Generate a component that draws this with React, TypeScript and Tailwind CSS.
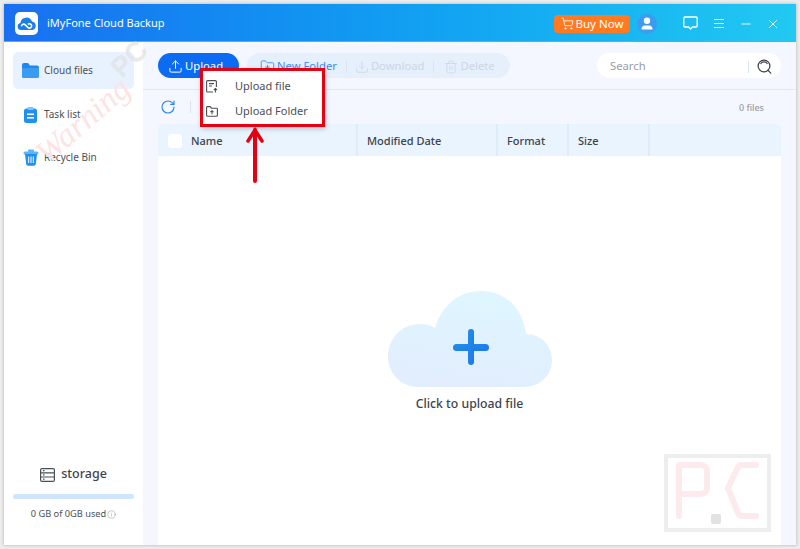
import React from "react";
import { Upload, FolderPlus, Download, Trash2, RotateCw, ShoppingCart, Minus, X, Info } from "lucide-react";

function Logo() {
  return (
    <div className="w-[23px] h-[23px] bg-white rounded-[5px] flex items-center justify-center">
      <svg width="20" height="16" viewBox="0 0 20 16">
        <path d="M4 14a3.6 3.6 0 0 1-.6-7.1A6 6 0 0 1 15 5.6a4.3 4.3 0 0 1 .6 8.4z" fill="#1a7fe8" />
        <path d="M4.5 10.2a2.2 2.2 0 0 1 3.8-1.3l2.4 2.4a2.2 2.2 0 1 0 .2-3" fill="none" stroke="#fff" strokeWidth="1.6" />
      </svg>
    </div>
  );
}

function FolderIcon() {
  return (
    <svg width="17" height="15" viewBox="0 0 17 15">
      <path d="M0 2a2 2 0 0 1 2-2h4l2 2.5h7a2 2 0 0 1 2 2V13a2 2 0 0 1-2 2H2a2 2 0 0 1-2-2z" fill="#1e88ec" />
      <path d="M0 5h17v8a2 2 0 0 1-2 2H2a2 2 0 0 1-2-2z" fill="#3a9bf2" />
    </svg>
  );
}

function TaskIcon() {
  return (
    <svg width="14" height="16" viewBox="0 0 14 16">
      <rect x="0" y="1.5" width="13" height="14.5" rx="2.5" fill="#1e90f0" />
      <rect x="3.5" y="0" width="6" height="3" rx="1" fill="#7cc4fa" />
      <rect x="3" y="6.5" width="7" height="1.6" fill="#fff" />
      <rect x="3" y="10" width="7" height="1.6" fill="#fff" />
    </svg>
  );
}

function BinIcon() {
  return (
    <svg width="16" height="17" viewBox="0 0 16 17">
      <rect x="0.5" y="2.5" width="15" height="3" rx="1.5" fill="#5cb5f7" />
      <rect x="5" y="0.5" width="6" height="2.5" rx="1" fill="#5cb5f7" />
      <path d="M2 5h12l-1.2 10a2 2 0 0 1-2 1.8H5.2a2 2 0 0 1-2-1.8z" fill="#1e90f0" />
      <path d="M5.7 7.5v6.5M8 7.5v6.5M10.3 7.5v6.5" stroke="#fff" strokeWidth="1" />
    </svg>
  );
}

function StorageIcon() {
  return (
    <svg width="15" height="14" viewBox="0 0 15 14" fill="none" stroke="#4a4f57" strokeWidth="1.2">
      <rect x="0.6" y="0.6" width="13.8" height="12.8" rx="1.5" />
      <path d="M0.6 4.8h13.8M0.6 9h13.8M3 2.7h1.5M3 6.9h1.5M3 11.2h1.5" />
    </svg>
  );
}

function FileUpIcon() {
  return (
    <svg width="12" height="13" viewBox="0 0 12 13" fill="none" stroke="#4a4f57" strokeWidth="1.1">
      <path d="M7 12H1.6a1 1 0 0 1-1-1V1.6a1 1 0 0 1 1-1h7.8a1 1 0 0 1 1 1V7" />
      <path d="M3 3.6h5M3 6h3M9.4 12.6V8.6M7.8 10l1.6-1.5L11 10" />
    </svg>
  );
}

function FolderUpIcon() {
  return (
    <svg width="12" height="11" viewBox="0 0 12 11" fill="none" stroke="#4a4f57" strokeWidth="1.1">
      <path d="M0.6 1.2a.6.6 0 0 1 .6-.6h3l1.2 1.6h5.2a.8.8 0 0 1 .8.8v6.2a1 1 0 0 1-1 1H1.6a1 1 0 0 1-1-1z" />
      <path d="M6 8.2V4.8M4.5 6.2L6 4.7l1.5 1.5" />
    </svg>
  );
}

function ChatIcon() {
  return (
    <svg width="15" height="15" viewBox="0 0 15 15" fill="none" stroke="#fff" strokeWidth="1.3">
      <path d="M2 1h11a1.2 1.2 0 0 1 1.2 1.2v7.6A1.2 1.2 0 0 1 13 11H9.4L7.5 13 5.6 11H2A1.2 1.2 0 0 1 .8 9.8V2.2A1.2 1.2 0 0 1 2 1z" strokeLinejoin="round" />
    </svg>
  );
}

function SearchGlass() {
  return (
    <svg width="15" height="15" viewBox="0 0 15 15" fill="none" stroke="#3a3f47" strokeWidth="1.2">
      <circle cx="7" cy="7" r="5.9" />
      <path d="M3.8 4.5a4 4 0 0 1 6.4 0M10.8 11.2l3 3" strokeLinecap="round" />
    </svg>
  );
}

function Avatar() {
  return (
    <div className="w-[20px] h-[20px] rounded-full bg-[#3b9bf0] flex items-center justify-center">
      <svg width="12" height="13" viewBox="0 0 12 13" fill="#fff">
        <circle cx="6" cy="3.7" r="3.2" />
        <path d="M0.5 12.5a3.5 3.5 0 0 1 3.5-4h4a3.5 3.5 0 0 1 3.5 4z" />
      </svg>
    </div>
  );
}

function Cloud() {
  return (
    <svg width="164" height="96" viewBox="0 0 164 96">
      <defs>
        <linearGradient id="cloudFill" x1="0.65" y1="0" x2="0.35" y2="1">
          <stop offset="0" stopColor="#def6ff" />
          <stop offset="1" stopColor="#e2edfd" />
        </linearGradient>
        <linearGradient id="plusFill" x1="0" y1="0" x2="1" y2="1">
          <stop offset="0" stopColor="#1f8fe8" />
          <stop offset="1" stopColor="#1f76ee" />
        </linearGradient>
      </defs>
      <path
        d="M30 96C13 96 0 82 0 66C0 47 14 33 32 33C37 33 43 34 47 37C54 14 71 0 93 0C117 0 135 17 138 43C153 43 164 55 164 69C164 84 152 96 136 96Z"
        fill="url(#cloudFill)"
      />
      <rect x="65" y="53" width="36" height="7" rx="3.5" fill="url(#plusFill)" />
      <rect x="80" y="38" width="6" height="36" rx="3" fill="url(#plusFill)" />
    </svg>
  );
}

function SideItem({ icon, label, active }: { icon: React.ReactNode; label: string; active?: boolean }) {
  return (
    <div className={`flex items-center h-[37px] rounded-[5px] ${active ? "bg-[#e8f2fe]" : ""}`}>
      <div className="w-[31px] flex justify-center pl-[4px]">{icon}</div>
      <span className="text-[10px] text-[#4b5058]">{label}</span>
    </div>
  );
}

function HeadCell({ width, children }: { width: string; children?: React.ReactNode }) {
  return (
    <div className={`${width} h-full flex items-center pl-[9px] pt-[2px] border-r-2 border-[#dfebfa] text-[#3e434b] text-[11px] font-medium`}>
      {children}
    </div>
  );
}

export default function App() {
  return (
    <div className="w-[800px] h-[549px] bg-[#ececec] p-[4px] overflow-hidden relative font-['Noto_Sans',sans-serif]">
      <div className="w-full h-full flex flex-col bg-white shadow-[0_0_3px_rgba(0,0,0,0.25)]">
        {/* title bar */}
        <div className="h-[38px] shrink-0 flex items-center pl-[11px] pr-[16px] pt-[2px] bg-gradient-to-r from-[#1a6ff0] to-[#22c9f1] border-b border-[#5aa8f5]">
          <Logo />
          <span className="ml-[9px] text-[11px] text-white">iMyFone Cloud Backup</span>
          <div className="ml-auto flex items-center">
            <div className="w-[76px] h-[18px] bg-[#ff7a20] rounded-[4px] flex items-center justify-center gap-[2px] text-white text-[11.5px]">
              <ShoppingCart size={13} strokeWidth={1.5} />
              Buy Now
            </div>
            <div className="ml-[7px]">
              <Avatar />
            </div>
            <div className="ml-[26px]">
              <ChatIcon />
            </div>
            <div className="ml-[16px] w-[10px] flex flex-col gap-[2.5px]">
              <div className="h-[1.5px] bg-white" />
              <div className="h-[1.5px] bg-white" />
              <div className="h-[1.5px] bg-white" />
            </div>
            <div className="ml-[15px]">
              <Minus size={14} color="#fff" strokeWidth={1.6} />
            </div>
            <div className="ml-[13px]">
              <X size={14} color="#fff" strokeWidth={1.6} />
            </div>
          </div>
        </div>

        <div className="flex flex-1 min-h-0">
          {/* sidebar */}
          <div className="w-[139px] shrink-0 bg-white pt-[10px] px-[9px] pb-[24px] flex flex-col">
            <SideItem active icon={<FolderIcon />} label="Cloud files" />
            <div className="mt-[7px]">
              <SideItem icon={<TaskIcon />} label="Task list" />
            </div>
            <div className="mt-[6px]">
              <SideItem icon={<BinIcon />} label="Recycle Bin" />
            </div>
            <div className="mt-auto flex items-center justify-center gap-[6px] text-[#3e434b] text-[12.5px] font-medium">
              <StorageIcon />
              storage
            </div>
            <div className="mt-[10px] h-[5px] rounded-full bg-[#cfe5fc]" />
            <div className="mt-[8px] flex items-center justify-center gap-[1px] text-[9.25px] text-[#4b5058]">
              0 GB of 0GB used
              <Info size={9} strokeWidth={1} color="#777" />
            </div>
          </div>

          {/* main */}
          <div className="flex-1 min-w-0 bg-[#f4f7ff] flex flex-col">
            <div className="h-[48px] shrink-0 flex items-center px-[15px] border-b border-[#dde8f6]">
              <div className="w-[81px] h-[25px] rounded-full bg-[#0b6bf3] flex items-center pl-[10px] pt-[2px] gap-[2px] text-white text-[11.25px]">
                <Upload size={15} strokeWidth={1.6} />
                Upload
              </div>
              <div className="ml-[8px] w-[263px] h-[25px] rounded-full bg-[#e6effc] flex items-center pl-[13px] pt-[2px] text-[11.25px]">
                <div className="flex items-center gap-[2px] text-[#3d8bf2]">
                  <FolderPlus size={15} strokeWidth={1.4} />
                  New Folder
                </div>
                <div className="w-px h-[12px] bg-[#d8e3f3] ml-[9px]" />
                <div className="ml-[8px] flex items-center gap-[2px] text-[#cdd6e3]">
                  <Download size={14} strokeWidth={1.4} />
                  Download
                </div>
                <div className="w-px h-[12px] bg-[#d8e3f3] ml-[9px]" />
                <div className="ml-[10px] flex items-center gap-[2px] text-[#cdd6e3]">
                  <Trash2 size={14} strokeWidth={1.4} />
                  Delete
                </div>
              </div>
              <div className="ml-auto w-[184px] h-[25px] rounded-full bg-white flex items-center pl-[13px] pr-[9px] pt-[2px] text-[11.25px] text-[#9a9ea6]">
                Search
                <div className="ml-auto w-px h-[12px] bg-[#d8e3f3]" />
                <div className="ml-[8px]">
                  <SearchGlass />
                </div>
              </div>
            </div>

            <div className="h-[34px] shrink-0 flex items-center pl-[2px] pr-[17px]">
              <div className="ml-[15px] flex items-center">
                <RotateCw size={16} color="#2b85ee" strokeWidth={1.7} />
                <div className="ml-[14px] w-px h-[12px] bg-[#dbe4f0]" />
              </div>
              <span className="ml-auto mr-[15px] pt-[2px] text-[9px] text-[#9a9ea6] font-medium">0 files</span>
            </div>

            <div className="flex-1 mx-[15px] bg-white rounded-t-[5px] flex flex-col min-h-0">
              <div className="h-[32px] shrink-0 flex items-center bg-[#e9f4ff] rounded-t-[5px]">
                <div className="w-[200px] h-full flex items-center pl-[10px] pt-[2px] border-r-2 border-[#dfebfa] text-[#3e434b] text-[11px] font-medium">
                  <div className="w-[14px] h-[14px] bg-white rounded-[3px] mr-[9px]" />
                  Name
                </div>
                <HeadCell width="w-[140px]">Modified Date</HeadCell>
                <HeadCell width="w-[71px]">Format</HeadCell>
                <HeadCell width="w-[81px]">Size</HeadCell>
              </div>
              <div className="flex-1 flex flex-col items-center pt-[135px]">
                <Cloud />
                <div className="mt-[8px] text-[12.25px] font-medium text-[#3e434b]">Click to upload file</div>
              </div>
            </div>
          </div>
        </div>
      </div>

      {/* upload menu with red annotation */}
      <div className="absolute left-[200px] top-[68px] w-[125px] h-[59px] bg-white border-[3px] border-[#e60012] shadow-[1px_2px_5px_rgba(0,0,0,0.2)] flex flex-col justify-center gap-[5px] pt-[2px] text-[11px] text-[#4b5058]">
        <div className="h-[20px] flex items-center pl-[3px]">
          <FileUpIcon />
          <span className="ml-[17px]">Upload file</span>
        </div>
        <div className="h-[20px] flex items-center pl-[3px]">
          <FolderUpIcon />
          <span className="ml-[17px]">Upload Folder</span>
        </div>
      </div>
      <svg className="absolute left-[245px] top-[126px]" width="20" height="58" viewBox="0 0 20 58" fill="none" stroke="#e60012" strokeLinecap="round">
        <path d="M10 4V55" strokeWidth="4" />
        <path d="M3 15L10 4l7 11" strokeWidth="3.5" />
      </svg>

      {/* watermark */}
      <div className="absolute left-[27px] top-[96px] -rotate-[41deg] text-[33px] italic text-[#fde3e3] font-['Liberation_Serif',serif] pointer-events-none">
        Warning
      </div>
      <div className="absolute left-[110px] top-[38px] -rotate-[45deg] text-[28px] font-bold text-[#e2e2e2] opacity-70 font-['Liberation_Sans',sans-serif] pointer-events-none">
        PC
      </div>
      <div className="absolute left-[664px] top-[454px] w-[107px] h-[78px] border-[4px] border-[#eeeeee] pointer-events-none">
        <svg width="99" height="70" viewBox="0 0 99 70" fill="none" stroke="#fdeaec" strokeWidth="6" strokeLinecap="round" strokeLinejoin="round">
          <path d="M11 58V7h22a6 6 0 0 1 6 6v17a6 6 0 0 1-6 6H11" />
          <path d="M88 7H74a5 5 0 0 0-4 2L60 30l10 25a5 5 0 0 0 4 3h14" />
          <rect x="43" y="56" width="10" height="10" rx="2" fill="#e2e2e2" stroke="none" />
        </svg>
      </div>
    </div>
  );
}
